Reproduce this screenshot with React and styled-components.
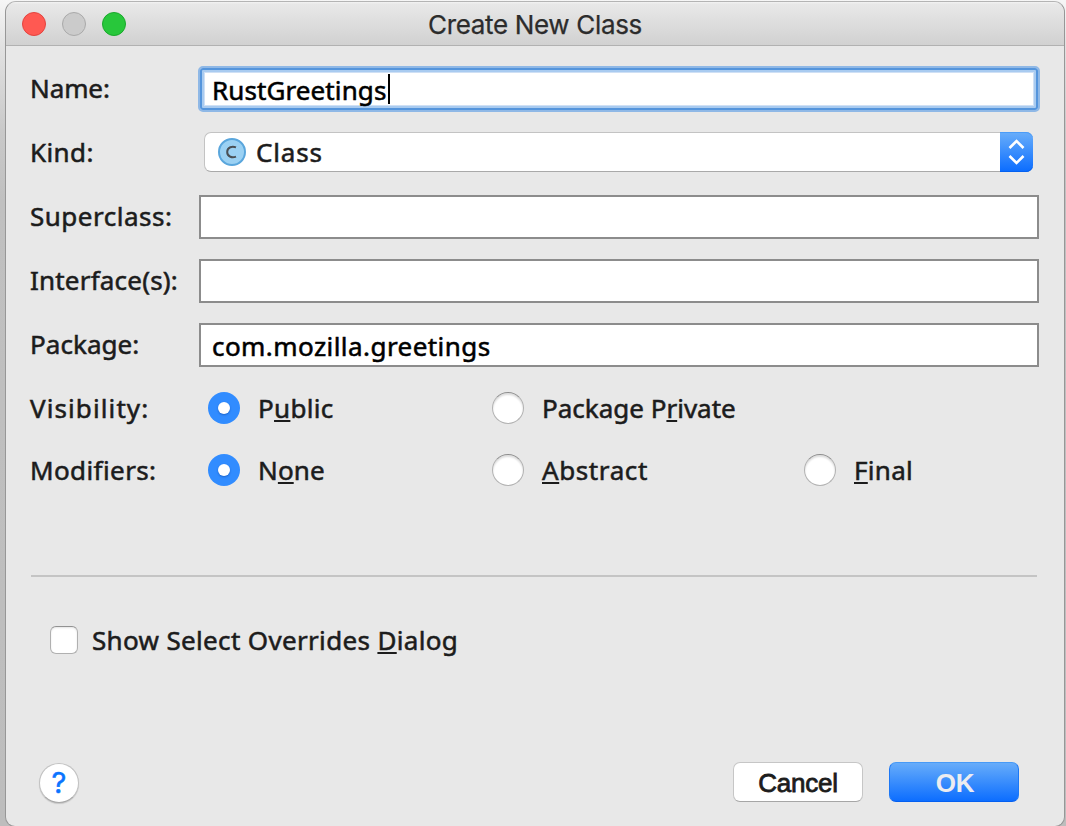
import React from "react";
import styled, { createGlobalStyle } from "styled-components";

const GlobalStyle = createGlobalStyle`
  * { box-sizing: border-box; }
  html, body, #root { height: 100%; }
  body { margin: 0; overflow: hidden; }
`;

const Desktop = styled.div`
  height: 826px;
  width: 1066px;
  padding: 1px 1px 0 5px;
  background: linear-gradient(#f6f6f6 0, #e2e2e2 45px, #c9c9c9 130px, #c0c0c0 200px, #bdbdbd 100%);
`;

const Window = styled.div`
  height: 826px;
  border: 1px solid #979797;
  border-top-color: #b4b4b4;
  border-radius: 11px 11px 10px 10px;
  background: #e8e8e8;
  overflow: hidden;
  font-family: "Noto Sans", sans-serif;
  font-size: 26px;
  color: #1c1c1c;
`;

const TitleBar = styled.header`
  height: 44px;
  display: grid;
  grid-template-columns: 1fr auto 1fr;
  align-items: center;
  border-bottom: 1px solid #b1b1b1;
  background: linear-gradient(#f3f3f3 0, #e8e8e8 2px, #d1d1d1 100%);
`;

const Lights = styled.div`
  display: flex;
  gap: 16px;
  padding-left: 16px;
`;

const Light = styled.span`
  width: 24px;
  height: 24px;
  border-radius: 50%;
  background: ${(p) => p.$fill};
  border: 1px solid ${(p) => p.$edge};
`;

const Title = styled.h1`
  margin: 0;
  padding-top: 2px;
  font: 400 26px/40px Inter, sans-serif;
  letter-spacing: ${(p) => p.$spacing}px;
  color: #2c2c2c;
  -webkit-text-stroke: 0.25px currentColor;
`;

const Form = styled.div`
  padding: 21px 25px 0 24px;
  display: flex;
  flex-direction: column;
  gap: 20px;
`;

const Row = styled.div`
  height: 44px;
  display: grid;
  grid-template-columns: 169px 1fr;
  align-items: center;
`;

const Text = styled.span`
  line-height: 36px;
  white-space: pre;
  letter-spacing: ${(p) => p.$spacing || 0}px;
  -webkit-text-stroke: 0.55px currentColor;
`;

const Label = styled(Text)`
  padding-bottom: ${(p) => (p.$low ? 0 : 2)}px;
`;

const Field = styled.div`
  height: 44px;
  padding: 0 0 0 11px;
  border: 2px solid #8c8c8c;
  background: #fff;
  color: #000;
`;

const FocusedField = styled(Field)`
  height: 46px;
  margin: -1px;
  padding: 4px 0 0 12px;
  border: 2px solid #8fb8e6;
  border-radius: 5px;
  background: #fff;
  box-shadow: inset 0 0 0 2px #5595dc, inset 0 0 0 4px #a9cbf0, inset 0 0 0 5px #cfe0f5;
`;

const Value = styled.div`
  height: 38px;
  padding-top: ${(p) => p.$top}px;
  display: flex;
  align-items: flex-start;
`;

const Caret = styled.span`
  width: 2px;
  height: 30px;
  flex: none;
  margin: 2px 0 0 1.5px;
  background: #000;
`;

const Combo = styled.div`
  height: 40px;
  margin: -2px 6px 0 5px;
  display: flex;
  align-items: center;
  border-radius: 7px;
  border: 1px solid #c3c3c3;
  border-bottom-color: #a9a9a9;
  border-right: 0;
  background: #fff;
  padding-left: 13px;
`;

const ComboText = styled(Text)`
  flex: 1;
  margin-left: 10px;
`;

const Stepper = styled.div`
  width: 33px;
  height: 40px;
  margin: -1px 0;
  border-radius: 0 7px 7px 0;
  background: linear-gradient(#69aefa, #0a6cff);
  box-shadow: inset 0 1px #4b9cf8, inset 0 -1px #0561f0;
`;

const Choices = styled.div`
  display: grid;
  grid-template-columns: 284px 312px 1fr;
  padding-left: 9px;
`;

const Choice = styled.div`
  display: flex;
  align-items: center;
  gap: 18px;
`;

const Radio = styled.span`
  width: 32px;
  height: 32px;
  border-radius: 50%;
  display: grid;
  place-items: center;
  ${(p) =>
    p.$on
      ? "background: #318cff;"
      : "background: #fff; border: 1px solid #b2b2b2; border-top-color: #8d8d8d; box-shadow: inset 0 2px 2px #dcdcdc;"}
`;

const Dot = styled.span`
  width: 12px;
  height: 12px;
  border-radius: 50%;
  background: #fff;
  box-shadow: 0 1px 2px rgba(0, 50, 140, 0.45);
`;

const Mnemonic = styled.u`
  text-decoration-thickness: 2px;
  text-underline-offset: 2px;
  text-decoration-skip-ink: none;
`;

const RadioRows = styled.div`
  margin-top: -1px;
  display: flex;
  flex-direction: column;
  gap: 18px;
`;

const Divider = styled.hr`
  width: auto;
  height: 2px;
  margin: 83px 27px 0 25px;
  border: 0;
  background: #c4c4c4;
`;

const CheckRow = styled.label`
  display: flex;
  align-items: center;
  height: 36px;
  margin-top: 45px;
  padding-left: 44px;
  gap: 14px;
`;

const CheckBox = styled.span`
  width: 28px;
  height: 28px;
  border: 1px solid #b0b0b0;
  border-top-color: #929292;
  border-radius: 6px;
  background: #fff;
  box-shadow: inset 0 1px 2px #e4e4e4;
`;

const Footer = styled.footer`
  display: flex;
  align-items: flex-start;
  gap: 26px;
  margin-top: 104px;
  padding: 0 45px 0 33px;
`;

const HelpButton = styled.button`
  width: 40px;
  height: 40px;
  margin: 1px auto 0 0;
  padding: 0;
  border: 1px solid #c2c2c2;
  border-bottom-color: #a8a8a8;
  border-radius: 50%;
  background: #fff;
  color: #0a74ff;
  font: 400 29px/38px Inter, sans-serif;
  -webkit-text-stroke: 0.5px currentColor;
  box-shadow: 0 1px 1px rgba(0, 0, 0, 0.15);
`;

const Button = styled.button`
  width: 130px;
  height: 40px;
  padding: 1px 0 0;
  border-radius: 7px;
  font: 400 26px/38px "Liberation Sans", Arial, sans-serif;
  border: 1px solid #c6c6c6;
  border-bottom-color: #a6a6a6;
  background: #fff;
  color: #1c1c1c;
  letter-spacing: -0.2px;
  -webkit-text-stroke: 0.8px currentColor;
`;

const PrimaryButton = styled(Button)`
  padding-left: 2px;
  border-color: #479af7 #1d78f5 #045ff0;
  background: linear-gradient(#69aefa, #0a6cff) border-box;
  color: #ececf0;
  font-weight: 700;
  -webkit-text-stroke: 0;
`;

function Option({ on, before = "", mark, after, spacing }) {
  return (
    <Choice>
      <Radio $on={on}>{on && <Dot />}</Radio>
      <Text $spacing={spacing}>
        {before}
        <Mnemonic>{mark}</Mnemonic>
        {after}
      </Text>
    </Choice>
  );
}

export default function App() {
  return (
    <>
      <GlobalStyle />
      <Desktop>
        <Window>
          <TitleBar>
            <Lights>
              <Light $fill="#ff5952" $edge="#e2443f" />
              <Light $fill="#cbcbcb" $edge="#a9a9a9" />
              <Light $fill="#28c73b" $edge="#1aa82c" />
            </Lights>
            <Title $spacing={-0.33}>Create New Class</Title>
          </TitleBar>
          <Form>
            <Row>
              <Label $spacing={-0.1}>Name:</Label>
              <FocusedField>
                <Value $top={0}>
                  <Text $spacing={0.1}>RustGreetings</Text>
                  <Caret />
                </Value>
              </FocusedField>
            </Row>
            <Row>
              <Label $spacing={0.4}>Kind:</Label>
              <Combo>
                <svg width="28" height="28" viewBox="0 0 28 28">
                  <circle cx="14" cy="14" r="13" fill="#9bd1f3" stroke="#5aa6dc" strokeWidth="2" />
                  <path d="M18 9.4C14.5 8 9.2 8.8 9.2 14s5.300 6 8.800 4.600" fill="none" stroke="#4a4f54" strokeWidth="2" />
                </svg>
                <ComboText $spacing={0.8}>Class</ComboText>
                <Stepper>
                  <svg width="33" height="40" viewBox="0 0 33 40">
                    <path d="M9.500 16l7-7 7 7M9.500 24l7 7 7-7" fill="none" stroke="#fff" strokeWidth="2.600" />
                  </svg>
                </Stepper>
              </Combo>
            </Row>
            <Row>
              <Label $spacing={0.5}>Superclass:</Label>
              <Field />
            </Row>
            <Row>
              <Label $spacing={0.2}>Interface(s):</Label>
              <Field />
            </Row>
            <Row>
              <Label $spacing={0.05}>Package:</Label>
              <Field>
                <Value $top={3}>
                  <Text $spacing={0.44}>com.mozilla.greetings</Text>
                </Value>
              </Field>
            </Row>
            <RadioRows>
              <Row>
                <Label $low $spacing={1.1}>Visibility:</Label>
                <Choices>
                  <Option on before="P" mark="u" after="blic" spacing={0.3} />
                  <Option before="Package P" mark="r" after="ivate" spacing={0} />
                </Choices>
              </Row>
              <Row>
                <Label $low $spacing={0.4}>Modifiers:</Label>
                <Choices>
                  <Option on before="N" mark="o" after="ne" spacing={0.1} />
                  <Option mark="A" after="bstract" spacing={0.6} />
                  <Option mark="F" after="inal" spacing={0.3} />
                </Choices>
              </Row>
            </RadioRows>
          </Form>
          <Divider />
          <CheckRow>
            <CheckBox />
            <Text $spacing={0.34}>
              Show Select Overrides <Mnemonic>D</Mnemonic>ialog
            </Text>
          </CheckRow>
          <Footer>
            <HelpButton>?</HelpButton>
            <Button>Cancel</Button>
            <PrimaryButton>OK</PrimaryButton>
          </Footer>
        </Window>
      </Desktop>
    </>
  );
}
